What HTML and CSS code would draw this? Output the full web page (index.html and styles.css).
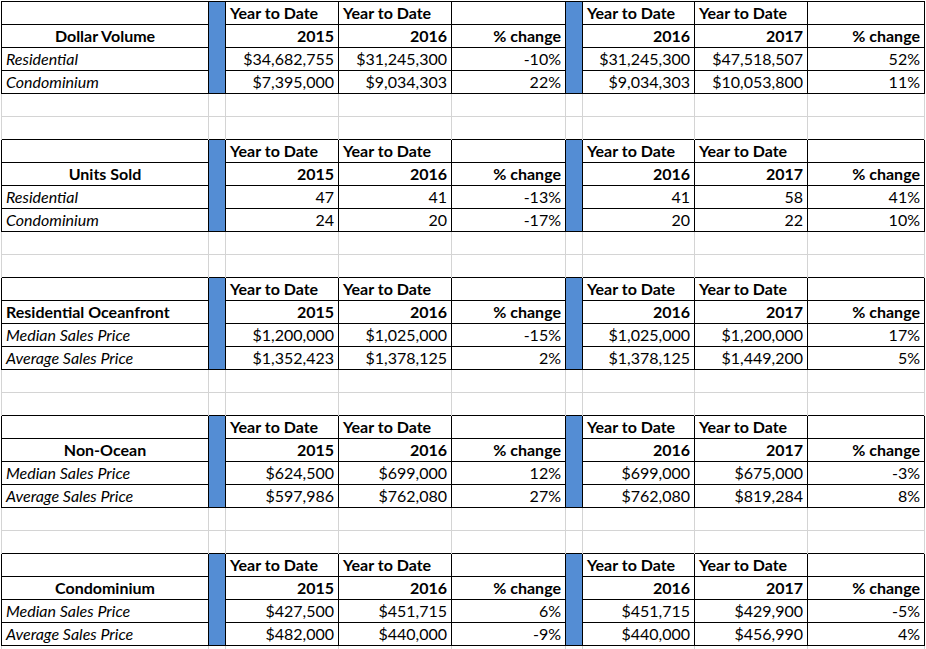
FILE: index.html
```html
<!DOCTYPE html>
<html>
<head>
<meta charset="utf-8">
<link rel="stylesheet" href="styles.css">
</head>
<body>
<table class="sheet">
  <colgroup>
    <col class="c-label"><col class="c-bar"><col class="c-num"><col class="c-num"><col class="c-pct"><col class="c-bar"><col class="c-num2"><col class="c-num"><col class="c-pct2">
  </colgroup>
  <tbody>
    <!-- Section 1 -->
    <tr class="sec">
      <td></td><td class="bar" rowspan="4"></td><td class="hd">Year to Date</td><td class="hd">Year to Date</td><td></td>
      <td class="bar" rowspan="4"></td><td class="hd">Year to Date</td><td class="hd">Year to Date</td><td></td>
    </tr>
    <tr class="sec">
      <td class="title">Dollar Volume</td><td class="yr">2015</td><td class="yr">2016</td><td class="yr">% change</td>
      <td class="yr">2016</td><td class="yr">2017</td><td class="yr">% change</td>
    </tr>
    <tr class="sec">
      <td class="lbl">Residential</td><td class="n">$34,682,755</td><td class="n">$31,245,300</td><td class="n">-10%</td>
      <td class="n">$31,245,300</td><td class="n">$47,518,507</td><td class="n">52%</td>
    </tr>
    <tr class="sec">
      <td class="lbl">Condominium</td><td class="n">$7,395,000</td><td class="n">$9,034,303</td><td class="n">22%</td>
      <td class="n">$9,034,303</td><td class="n">$10,053,800</td><td class="n">11%</td>
    </tr>
    <tr class="gap"><td></td><td></td><td></td><td></td><td></td><td></td><td></td><td></td><td></td></tr>
    <tr class="gap"><td></td><td></td><td></td><td></td><td></td><td></td><td></td><td></td><td></td></tr>

    <!-- Section 2 -->
    <tr class="sec">
      <td></td><td class="bar" rowspan="4"></td><td class="hd">Year to Date</td><td class="hd">Year to Date</td><td></td>
      <td class="bar" rowspan="4"></td><td class="hd">Year to Date</td><td class="hd">Year to Date</td><td></td>
    </tr>
    <tr class="sec">
      <td class="title">Units Sold</td><td class="yr">2015</td><td class="yr">2016</td><td class="yr">% change</td>
      <td class="yr">2016</td><td class="yr">2017</td><td class="yr">% change</td>
    </tr>
    <tr class="sec">
      <td class="lbl">Residential</td><td class="n">47</td><td class="n">41</td><td class="n">-13%</td>
      <td class="n">41</td><td class="n">58</td><td class="n">41%</td>
    </tr>
    <tr class="sec">
      <td class="lbl">Condominium</td><td class="n">24</td><td class="n">20</td><td class="n">-17%</td>
      <td class="n">20</td><td class="n">22</td><td class="n">10%</td>
    </tr>
    <tr class="gap"><td></td><td></td><td></td><td></td><td></td><td></td><td></td><td></td><td></td></tr>
    <tr class="gap"><td></td><td></td><td></td><td></td><td></td><td></td><td></td><td></td><td></td></tr>

    <!-- Section 3 -->
    <tr class="sec">
      <td></td><td class="bar" rowspan="4"></td><td class="hd">Year to Date</td><td class="hd">Year to Date</td><td></td>
      <td class="bar" rowspan="4"></td><td class="hd">Year to Date</td><td class="hd">Year to Date</td><td></td>
    </tr>
    <tr class="sec">
      <td class="title left">Residential Oceanfront</td><td class="yr">2015</td><td class="yr">2016</td><td class="yr">% change</td>
      <td class="yr">2016</td><td class="yr">2017</td><td class="yr">% change</td>
    </tr>
    <tr class="sec">
      <td class="lbl">Median Sales Price</td><td class="n">$1,200,000</td><td class="n">$1,025,000</td><td class="n">-15%</td>
      <td class="n">$1,025,000</td><td class="n">$1,200,000</td><td class="n">17%</td>
    </tr>
    <tr class="sec">
      <td class="lbl">Average Sales Price</td><td class="n">$1,352,423</td><td class="n">$1,378,125</td><td class="n">2%</td>
      <td class="n">$1,378,125</td><td class="n">$1,449,200</td><td class="n">5%</td>
    </tr>
    <tr class="gap"><td></td><td></td><td></td><td></td><td></td><td></td><td></td><td></td><td></td></tr>
    <tr class="gap"><td></td><td></td><td></td><td></td><td></td><td></td><td></td><td></td><td></td></tr>

    <!-- Section 4 -->
    <tr class="sec">
      <td></td><td class="bar" rowspan="4"></td><td class="hd">Year to Date</td><td class="hd">Year to Date</td><td></td>
      <td class="bar" rowspan="4"></td><td class="hd">Year to Date</td><td class="hd">Year to Date</td><td></td>
    </tr>
    <tr class="sec">
      <td class="title">Non-Ocean</td><td class="yr">2015</td><td class="yr">2016</td><td class="yr">% change</td>
      <td class="yr">2016</td><td class="yr">2017</td><td class="yr">% change</td>
    </tr>
    <tr class="sec">
      <td class="lbl">Median Sales Price</td><td class="n">$624,500</td><td class="n">$699,000</td><td class="n">12%</td>
      <td class="n">$699,000</td><td class="n">$675,000</td><td class="n">-3%</td>
    </tr>
    <tr class="sec">
      <td class="lbl">Average Sales Price</td><td class="n">$597,986</td><td class="n">$762,080</td><td class="n">27%</td>
      <td class="n">$762,080</td><td class="n">$819,284</td><td class="n">8%</td>
    </tr>
    <tr class="gap"><td></td><td></td><td></td><td></td><td></td><td></td><td></td><td></td><td></td></tr>
    <tr class="gap"><td></td><td></td><td></td><td></td><td></td><td></td><td></td><td></td><td></td></tr>

    <!-- Section 5 -->
    <tr class="sec">
      <td></td><td class="bar" rowspan="4"></td><td class="hd">Year to Date</td><td class="hd">Year to Date</td><td></td>
      <td class="bar" rowspan="4"></td><td class="hd">Year to Date</td><td class="hd">Year to Date</td><td></td>
    </tr>
    <tr class="sec">
      <td class="title">Condominium</td><td class="yr">2015</td><td class="yr">2016</td><td class="yr">% change</td>
      <td class="yr">2016</td><td class="yr">2017</td><td class="yr">% change</td>
    </tr>
    <tr class="sec">
      <td class="lbl">Median Sales Price</td><td class="n">$427,500</td><td class="n">$451,715</td><td class="n">6%</td>
      <td class="n">$451,715</td><td class="n">$429,900</td><td class="n">-5%</td>
    </tr>
    <tr class="sec">
      <td class="lbl">Average Sales Price</td><td class="n">$482,000</td><td class="n">$440,000</td><td class="n">-9%</td>
      <td class="n">$440,000</td><td class="n">$456,990</td><td class="n">4%</td>
    </tr>
    <tr class="gap"><td></td><td></td><td></td><td></td><td></td><td></td><td></td><td></td><td></td></tr>
  </tbody>
</table>
</body>
</html>
```
FILE: styles.css
```css
html, body {
  margin: 0;
  padding: 0;
  background: #ffffff;
  overflow: hidden;
}
body {
  padding: 1px 0 0 1px;
  font-family: Lato, "Open Sans", sans-serif;
  font-size: 16px;
  color: #000000;
}
.sheet {
  border-collapse: collapse;
  table-layout: fixed;
  width: 924px;
}
.c-label { width: 207px; }
.c-bar { width: 17px; }
.c-num { width: 113px; }
.c-num2 { width: 112px; }
.c-pct { width: 114px; }
.c-pct2 { width: 117px; }

.sheet td {
  height: 20px;
  padding: 0 4px 2px 4px;
  line-height: 18px;
  vertical-align: bottom;
  white-space: nowrap;
  overflow: hidden;
}
.sec td {
  border: 1px solid #000000;
}
.gap td {
  border-top: 1px solid #d4d4d4;
  border-left: 1px solid #d4d4d4;
  border-right: 1px solid #d4d4d4;
  border-bottom: none;
}
.sheet td.bar {
  background: #548dd4;
  padding: 0;
}
.hd {
  font-weight: bold;
  text-align: left;
}
.yr {
  font-weight: bold;
  text-align: right;
}
.title {
  font-weight: bold;
  text-align: center;
}
.title.left {
  text-align: left;
}
.lbl {
  font-style: italic;
  text-align: left;
}
.n {
  text-align: right;
}
```
